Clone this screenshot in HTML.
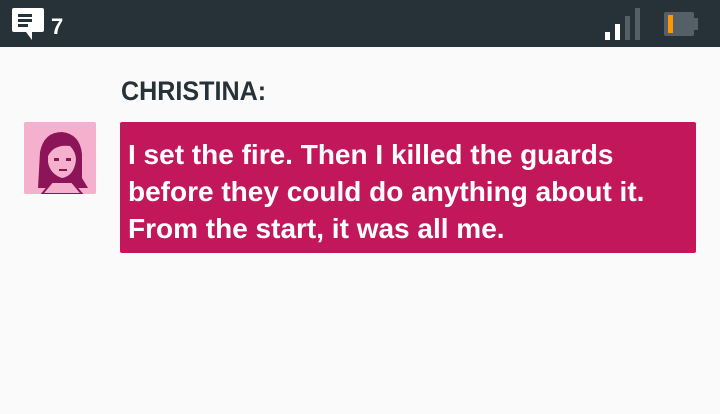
<!DOCTYPE html>
<html><head><meta charset="utf-8"><style>
body{margin:0;width:720px;height:414px;background:#fafafa;font-family:"Liberation Sans",sans-serif;overflow:hidden;position:relative}
.bar{position:absolute;left:0;top:0;width:720px;height:47px;background:#263238}
.name{position:absolute;left:121px;top:76px;font-size:27px;font-weight:bold;color:#263238;transform:scaleX(0.93);transform-origin:left}
.bub{position:absolute;left:120px;top:122px;width:576px;height:131px;background:#c2185b;border-radius:2px}
.txt{position:absolute;left:128px;top:136px;color:#fff;font-size:28px;line-height:37px;white-space:nowrap;font-weight:bold}
</style></head><body>
<div class="bar">
<svg width="720" height="47" style="position:absolute;left:0;top:0">
<path d="M14 8h28a2 2 0 0 1 2 2v20a2 2 0 0 1-2 2h-10v8l-6-8h-12a2 2 0 0 1-2-2v-20a2 2 0 0 1 2-2z" fill="#fff"/>
<rect x="18" y="14" width="14" height="3" fill="#263238"/>
<rect x="18" y="19" width="14" height="3" fill="#263238"/>
<rect x="18" y="24" width="10" height="3" fill="#263238"/>
<text x="51" y="34" fill="#fff" font-size="22" font-weight="bold" font-family="Liberation Sans">7</text>
<rect x="605" y="32" width="5" height="8" fill="#fff"/>
<rect x="615" y="24" width="5" height="16" fill="#fff"/>
<rect x="625" y="16" width="5" height="24" fill="#555f66"/>
<rect x="635" y="8" width="5" height="32" fill="#555f66"/>
<rect x="664" y="12" width="30" height="24" rx="2" fill="#555f66"/>
<rect x="694" y="18" width="4" height="12" fill="#555f66"/>
<rect x="668" y="15" width="5" height="18" fill="#ff9800"/>
</svg>
</div>
<svg style="position:absolute;left:24px;top:122px" width="72" height="72">
<rect width="72" height="72" rx="2" fill="#f4b0cc"/>
<path d="M14 66 L16 30 Q20 10 38 10 Q56 12 58 32 L58 56 L64 66 Z" fill="#8b1558"/>
<path d="M24 34 Q30 22 46 24 Q52 30 52 38 Q50 54 38 56 Q26 52 24 40Z" fill="#f4b0cc"/>
<rect x="30" y="36" width="5" height="3" fill="#8b1558"/>
<rect x="42" y="36" width="5" height="3" fill="#8b1558"/>
<rect x="35" y="47" width="8" height="2" fill="#8b1558"/>
<path d="M18 72 L28 60 L48 60 L58 72Z" fill="#f4b0cc" stroke="#8b1558" stroke-width="2"/>
</svg>
<div class="name">CHRISTINA:</div>
<div class="bub"></div>
<div class="txt">I set the fire. Then I killed the guards<br>before they could do anything about it.<br>From the start, it was all me.</div>
</body></html>
